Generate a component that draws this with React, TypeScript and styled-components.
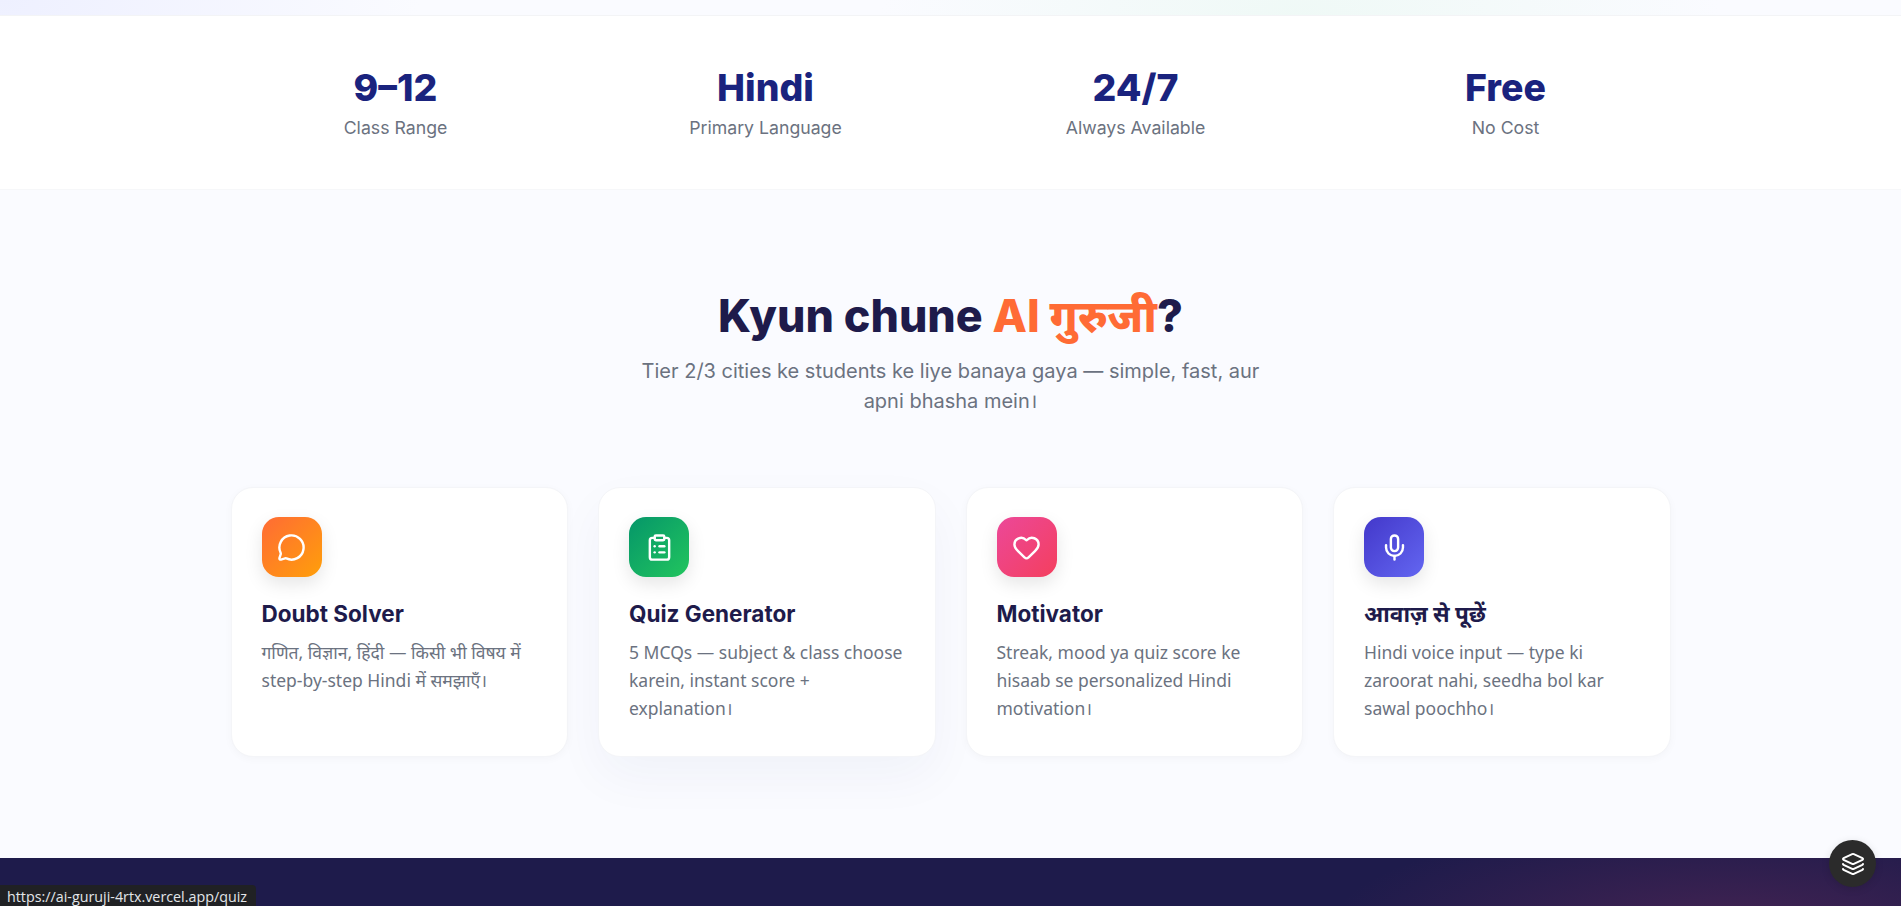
import React from "react";
import styled, { createGlobalStyle } from "styled-components";
import { MessageCircle, ClipboardList, Heart, Mic, Layers } from "lucide-react";

const Global = createGlobalStyle`
  html, body { margin: 0; padding: 0; height: 906px; overflow: hidden; background: #fafbff; }
  #root { height: 906px; }
  * { box-sizing: border-box; }
`;

const Page = styled.div`
  position: relative;
  height: 906px;
  overflow: hidden;
  display: flex;
  flex-direction: column;
  font-family: Inter, "Noto Sans", sans-serif;
  background: #fafbff;
`;

const HeroEnd = styled.div`
  height: 16px;
  flex: none;
  border-bottom: 1px solid #f3f4f6;
  background:
    radial-gradient(ellipse 420px 200px at 1300px 20px, #eff9f6 0%, rgba(239, 249, 246, 0) 100%),
    radial-gradient(ellipse 420px 200px at 0px 0px, #eef0ff 0%, rgba(238, 240, 255, 0) 100%),
    #fafbff;
`;

const StatsBand = styled.section`
  flex: none;
  height: 174px;
  background: #fff;
  border-bottom: 1px solid #f6f7f9;
  display: flex;
  justify-content: center;
  align-items: center;
`;

const StatsGrid = styled.div`
  width: 1440px;
  display: grid;
  grid-template-columns: repeat(4, 1fr);
  gap: 40px;
`;

const Stat = styled.div`
  text-align: center;
`;

const StatValue = styled.div`
  margin-top: 1px;
  font-size: 37.4px;
  font-weight: 800;
  line-height: 46px;
  color: #1a237e;
`;

const StatLabel = styled.div`
  margin-top: 3px;
  font-size: 17.7px;
  line-height: 27px;
  color: #6b7280;
`;

const Features = styled.section`
  flex: 1;
  padding-top: 100px;
  display: flex;
  flex-direction: column;
  align-items: center;
`;

const Heading = styled.h2`
  margin: -1px 0 1px;
  font-size: 44.8px;
  line-height: 54px;
  font-weight: 800;
  color: #1e1b4b;
`;

const Accent = styled.span`
  color: #ff6b35;
`;

const Subtitle = styled.p`
  margin: 12px 0 0;
  width: 640px;
  text-align: center;
  font-size: 20px;
  line-height: 30px;
  color: #6b7280;
`;

const CardGrid = styled.div`
  margin-top: 71px;
  width: 1440px;
  display: grid;
  grid-template-columns: repeat(4, 1fr);
  gap: 30px;
`;

const Card = styled.article<{ $lifted?: boolean }>`
  height: 270px;
  padding: 29px 30px;
  background: #fff;
  border-radius: 22px;
  border: 1px solid #f4f5f8;
  box-shadow: ${(p) =>
    p.$lifted ? "0 20px 50px rgba(26, 35, 126, 0.045)" : "0 2px 8px rgba(0, 0, 0, 0.03)"};
`;

const IconBox = styled.div<{ $from: string; $to: string }>`
  width: 60px;
  height: 60px;
  border-radius: 17px;
  display: flex;
  align-items: center;
  justify-content: center;
  color: #fff;
  background: linear-gradient(135deg, ${(p) => p.$from}, ${(p) => p.$to});
  box-shadow: 0 7px 18px rgba(0, 0, 0, 0.1);
`;

const CardTitle = styled.h3`
  margin: 21px 0 0;
  font-size: 22.5px;
  line-height: 32px;
  font-weight: 700;
  color: #1e1b4b;
`;

const CardText = styled.p`
  margin: 8px 0 0;
  font-family: "Noto Sans", sans-serif;
  font-size: 17.5px;
  line-height: 28px;
  color: #6b7280;
`;

const Footer = styled.footer`
  flex: none;
  height: 48px;
  background:
    radial-gradient(ellipse 400px 110px at 1730px 70px, #432352 0%, rgba(67, 35, 82, 0) 100%),
    #1e1b4b;
`;

const StatusBubble = styled.div`
  position: absolute;
  left: 0;
  bottom: 0;
  height: 21px;
  width: 256px;
  padding: 2px 0 0 7px;
  background: #202124;
  border-top-right-radius: 4px;
  font-family: "Open Sans", sans-serif;
  font-size: 14.3px;
  line-height: 20px;
  white-space: nowrap;
  color: #e3e6e9;
`;

const Fab = styled.button`
  position: absolute;
  left: 1829px;
  top: 840px;
  width: 47px;
  height: 47px;
  padding: 0;
  border: none;
  border-radius: 50%;
  display: flex;
  align-items: center;
  justify-content: center;
  background: #2b2b2b;
  color: #fff;
  box-shadow: 0 2px 8px rgba(0, 0, 0, 0.12);
`;

const stats = [
  { value: "9–12", label: "Class Range" },
  { value: "Hindi", label: "Primary Language" },
  { value: "24/7", label: "Always Available" },
  { value: "Free", label: "No Cost" },
];

const cards = [
  {
    Icon: MessageCircle,
    from: "#ff6b35",
    to: "#ff9f0a",
    title: "Doubt Solver",
    text: "गणित, विज्ञान, हिंदी — किसी भी विषय में step-by-step Hindi में समझाएँ।",
  },
  {
    Icon: ClipboardList,
    from: "#059669",
    to: "#22c55e",
    title: "Quiz Generator",
    text: "5 MCQs — subject & class choose karein, instant score + explanation।",
    lifted: true,
  },
  {
    Icon: Heart,
    from: "#ec4899",
    to: "#f43f5e",
    title: "Motivator",
    text: "Streak, mood ya quiz score ke hisaab se personalized Hindi motivation।",
  },
  {
    Icon: Mic,
    from: "#4338ca",
    to: "#6366f1",
    title: "आवाज़ से पूछें",
    text: "Hindi voice input — type ki zaroorat nahi, seedha bol kar sawal poochho।",
  },
];

export default function App() {
  return (
    <Page>
      <Global />
      <HeroEnd />
      <StatsBand>
        <StatsGrid>
          {stats.map((s) => (
            <Stat key={s.label}>
              <StatValue>{s.value}</StatValue>
              <StatLabel>{s.label}</StatLabel>
            </Stat>
          ))}
        </StatsGrid>
      </StatsBand>
      <Features>
        <Heading>
          Kyun chune <Accent>AI गुरुजी</Accent>?
        </Heading>
        <Subtitle>Tier 2/3 cities ke students ke liye banaya gaya — simple, fast, aur apni bhasha mein।</Subtitle>
        <CardGrid>
          {cards.map(({ Icon, from, to, title, text, lifted }) => (
            <Card key={title} $lifted={lifted}>
              <IconBox $from={from} $to={to}>
                <Icon size={29} strokeWidth={2} />
              </IconBox>
              <CardTitle>{title}</CardTitle>
              <CardText>{text}</CardText>
            </Card>
          ))}
        </CardGrid>
      </Features>
      <Footer />
      <StatusBubble>https://ai-guruji-4rtx.vercel.app/quiz</StatusBubble>
      <Fab aria-label="layers">
        <Layers size={24} strokeWidth={2} />
      </Fab>
    </Page>
  );
}
